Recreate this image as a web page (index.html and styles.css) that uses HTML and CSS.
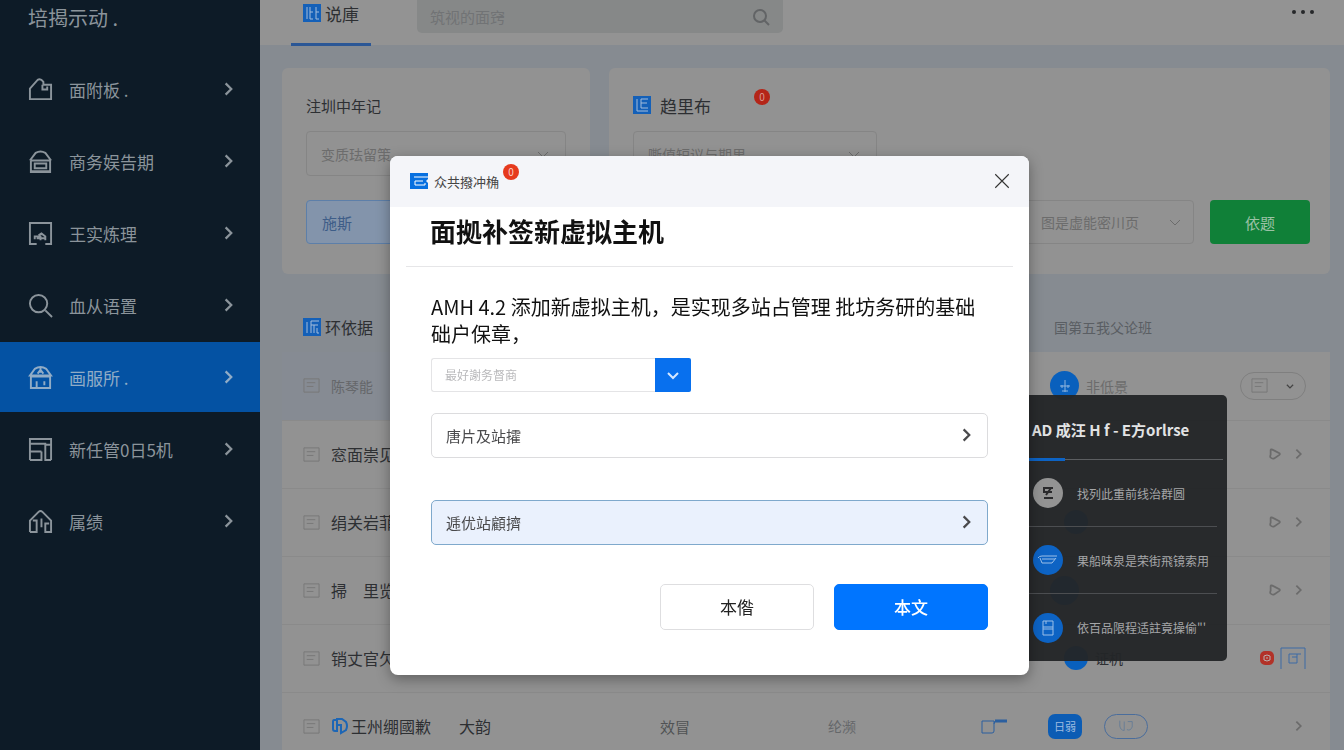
FILE: index.html
```html
<!DOCTYPE html>
<html lang="zh-CN">
<head>
    <meta charset="UTF-8">
    <meta name="viewport" content="width=device-width, initial-scale=1.0">
    <title>AMH 4.2</title>
    <link rel="stylesheet" href="styles.css">
</head>
<body>
    <svg class="defs" aria-hidden="true">
        <symbol id="right" viewBox="0 0 16 16"><path d="M5 3l5 5-5 5"/></symbol>
        <symbol id="down" viewBox="0 0 16 16"><path d="M3 6l5 5 5-5"/></symbol>
        <symbol id="tag" viewBox="0 0 16 16"><path d="M3 4q0-2 2-1l8 4q1 1 0 2l-6 4q-2 1-4-1-1-1 0-3z"/></symbol>
        <symbol id="box" viewBox="0 0 18 18"><path d="M1 2h16v14H1zM4 6h9M4 10h7"/></symbol>
    </svg>

    <aside class="sidebar">
        <div class="brand">培揭示动 .</div>
        <nav class="menu">
            <a href="#" class="item">
                <svg class="icon" viewBox="0 0 26 26"><path d="M2 23V12L10 3q3-2 6 2v3h8v15zM1 23h24M15 8v5h5v-3"/></svg>
                <span>面附板 .</span><svg class="arrow"><use href="#right"/></svg>
            </a>
            <a href="#" class="item">
                <svg class="icon" viewBox="0 0 26 26"><path d="M2 12L8 4q5-3 10 0l6 8M2 12h22M3 12v12h20V12M7 15h12v5H7zM3 23h20"/></svg>
                <span>商务娱告期</span><svg class="arrow"><use href="#right"/></svg>
            </a>
            <a href="#" class="item">
                <svg class="icon" viewBox="0 0 26 26"><path d="M9 24H2V2h22v22h-6M7 19v-3h6v4M11 15l3-2 4 3v4M9 18h8"/></svg>
                <span>王实炼理</span><svg class="arrow"><use href="#right"/></svg>
            </a>
            <a href="#" class="item">
                <svg class="icon" viewBox="0 0 26 26"><circle cx="11" cy="11" r="9"/><path d="M18 18l7 7"/></svg>
                <span>血从语置</span><svg class="arrow"><use href="#right"/></svg>
            </a>
            <a href="#" class="item active">
                <svg class="icon" viewBox="0 0 26 26"><path d="M2 11l5-7q6-4 12 0l5 7zM3 11v13h20V11M9 24v-7M17 17v4M13 3v5M10 9l3-4 3 4M2 12h22"/></svg>
                <span>画服所 .</span><svg class="arrow"><use href="#right"/></svg>
            </a>
            <a href="#" class="item">
                <svg class="icon" viewBox="0 0 26 26"><path d="M24 24h-6V8h5M2 24V2h22v22M2 7h17M2 15h12M2 24h12v-9"/></svg>
                <span>新任管0日5机</span><svg class="arrow"><use href="#right"/></svg>
            </a>
            <a href="#" class="item">
                <svg class="icon" viewBox="0 0 26 26"><path d="M2 24V12L11 3q2-2 4 0l9 9v12h-6v-9h4M2 24h7V12H5M14 10v9"/></svg>
                <span>属绩</span><svg class="arrow"><use href="#right"/></svg>
            </a>
        </nav>
    </aside>

    <main class="main">
        <header class="topbar">
            <a href="#" class="tab">
                <svg class="logo" viewBox="0 0 18 18"><rect width="18" height="18"/><path d="M4 3v12M7 3v12h3M7 8h3M13 3v12h3M13 8h3"/></svg>
                <span>说庫</span>
            </a>
            <div class="search">
                <input type="text" aria-label="搜索" placeholder="筑视的面窍">
                <svg class="search-icon" viewBox="0 0 18 18"><circle cx="8" cy="8" r="6"/><path d="M12 12l5 5"/></svg>
            </div>
            <button class="more" aria-label="更多"><i></i><i></i><i></i></button>
        </header>

        <div class="content">
            <div class="cards">
                <section class="card card-small">
                    <h2>注圳中年记</h2>
                    <div class="select">
                        <select aria-label="注圳中年记"><option>变质珐留策</option></select>
                        <svg><use href="#down"/></svg>
                    </div>
                    <button class="filter">施斯</button>
                </section>
                <section class="card card-large">
                    <h2>
                        <svg class="logo" viewBox="0 0 18 18"><rect width="18" height="18"/><path d="M4 3v12h11M8 3h7M8 3v9h7M8 7h6"/></svg>
                        <span>趋里布</span><b class="badge">0</b>
                    </h2>
                    <div class="select select-narrow">
                        <select aria-label="趋里布"><option>嘶值短议与期里</option></select>
                        <svg><use href="#down"/></svg>
                    </div>
                    <div class="card-row">
                        <div class="select select-filter">
                            <select aria-label="筛选"><option>图是虚能密川页</option></select>
                            <svg><use href="#down"/></svg>
                        </div>
                        <button class="green">依题</button>
                    </div>
                </section>
            </div>

            <div class="list-head">
                <h2>
                    <svg class="logo" viewBox="0 0 18 18"><rect width="18" height="18"/><path d="M4 4v11M8 15V3h8M8 7h7M11 7v8M14 10v5h2"/></svg>
                    <span>环依据</span>
                </h2>
                <span class="list-note">国第五我父论班</span>
            </div>

            <table class="list">
                <colgroup>
                    <col class="c-box"><col class="c-name"><col class="c-type"><col class="c-site"><col class="c-state"><col class="c-icon"><col><col class="c-act">
                </colgroup>
                <tr>
                    <td class="tint"><svg class="box"><use href="#box"/></svg></td>
                    <td class="tint grey">陈琴能</td><td></td><td></td><td></td><td></td>
                    <td><div class="state"><span class="dot"><svg viewBox="0 0 16 16"><path d="M8 2v12M3 8h10M5 7v3M11 7v3M5 13h6"/></svg></span>非低景</div></td>
                    <td><button class="pill" aria-label="选项"><svg class="box"><use href="#box"/></svg><svg class="mini"><use href="#down"/></svg></button></td>
                </tr>
                <tr>
                    <td><svg class="box"><use href="#box"/></svg></td>
                    <td>窓面崇见</td><td></td><td></td><td></td><td></td><td></td>
                    <td><div class="acts"><svg><use href="#tag"/></svg><svg><use href="#right"/></svg></div></td>
                </tr>
                <tr>
                    <td><svg class="box"><use href="#box"/></svg></td>
                    <td>绢关岩菲</td><td></td><td></td><td></td><td></td>
                    <td><div class="state inner"><span class="dot small"></span></div></td>
                    <td><div class="acts"><svg><use href="#tag"/></svg><svg><use href="#right"/></svg></div></td>
                </tr>
                <tr>
                    <td><svg class="box"><use href="#box"/></svg></td>
                    <td>掃　里览</td><td></td><td></td><td></td><td></td>
                    <td><div class="state"><span class="dot"></span></div></td>
                    <td><div class="acts"><svg><use href="#tag"/></svg><svg><use href="#right"/></svg></div></td>
                </tr>
                <tr>
                    <td><svg class="box"><use href="#box"/></svg></td>
                    <td>销丈官欠</td><td></td><td></td><td></td><td></td>
                    <td><div class="state inner dark"><span class="dot small"></span>证机</div></td>
                    <td><div class="acts tight">
                        <svg class="alert" viewBox="0 0 14 14"><rect width="14" height="14" rx="5"/><path d="M4 5q3-2 6 0v4q-3 2-6 0zM7 6v2"/></svg>
                        <svg class="frame" viewBox="0 0 26 22"><path d="M1 22V1h24v21M9 7h12M9 7v9h8V7M12 10h5"/></svg>
                    </div></td>
                </tr>
                <tr>
                    <td><svg class="box"><use href="#box"/></svg></td>
                    <td><div class="named"><svg class="ring" viewBox="0 0 18 18"><path d="M6 3H3q-1 0-1 2v7q0 2 2 2h2V2h5l4 3q2 4 0 8l-5 3V8M6 8h5"/></svg>王州绷國歉</div></td>
                    <td>大韵</td><td class="mid">效冒</td><td class="grey">纶濒</td>
                    <td><svg class="key" viewBox="0 0 26 16"><path d="M1 3h12v10q0 2-2 2H1zM13 6l1-3h11"/><path d="M14 3h12" stroke-width="3"/></svg></td>
                    <td><div class="tags"><span class="tag-blue">日弱</span><span class="tag-line"><svg viewBox="0 0 18 14"><path d="M2 1v6q1 5 5 5V2M11 2h5v6q-2 5-6 3"/></svg></span></div></td>
                    <td><div class="acts"><svg><use href="#right"/></svg></div></td>
                </tr>
            </table>
        </div>

        <div class="popover">
            <h3>AD 成汪 H f - E方orlrse</h3>
            <ul>
                <li><span class="avatar light"><svg viewBox="0 0 18 18"><path d="M4 4h10M4 8h9M5 4v5M12 4l-5 7M5 14h9"/></svg></span>找列此重前线治群圆</li>
                <li><span class="avatar"><svg viewBox="0 0 20 18"><path d="M0 7q1-2 4-2h15M2 7l2 5h10l4-5M4 8h13"/></svg></span>果船味泉是荣街飛镜索用</li>
                <li><span class="avatar"><svg viewBox="0 0 18 18"><path d="M4 2h10v14H4zM4 8h10M4 10h10M7 2v3"/></svg></span>依百品限程适註竟操偷"'</li>
            </ul>
        </div>
    </main>

    <div class="overlay">
        <div class="modal" role="dialog" aria-labelledby="modal-title">
            <div class="modal-bar">
                <svg class="logo bright" viewBox="0 0 18 18"><path class="fill" d="M0 1h18v6l-2 2 2 2v6H0z"/><path d="M4 5h14M5 9h8M5 9v4h10v-2"/></svg>
                <span>众共撥冲桷</span><b class="badge">0</b>
                <button class="close" aria-label="关闭"><svg viewBox="0 0 16 16"><path d="M2 2l12 12M14 2L2 14"/></svg></button>
            </div>
            <h1 id="modal-title">面拠补签新虚拟主机</h1>
            <div class="modal-body">
                <p>AMH 4.2 添加新虚拟主机，是实现多站占管理 批坊务研的基础<br>础户保章，</p>
                <div class="combo">
                    <input type="text" aria-label="主机" placeholder="最好謝务督商">
                    <button aria-label="展开"><svg><use href="#down"/></svg></button>
                </div>
                <button class="option">唐片及站攉<svg><use href="#right"/></svg></button>
                <button class="option selected">逓优站顧擠<svg><use href="#right"/></svg></button>
                <div class="buttons">
                    <button class="btn">本偺</button>
                    <button class="btn primary">本文</button>
                </div>
            </div>
        </div>
    </div>
</body>
</html>
```
FILE: styles.css
```css
* {
    box-sizing: border-box;
}
body {
    margin: 0;
    display: flex;
    height: 100vh;
    overflow: hidden;
    font-family: "Noto Sans CJK SC", "Noto Sans", sans-serif;
    font-size: 17px;
    color: #2d2f32;
    background-color: #868b91;
}
svg {
    width: 16px;
    height: 16px;
    flex: none;
    fill: none;
    stroke: currentColor;
    stroke-width: 2;
}
button, input, select {
    font-family: inherit;
    color: inherit;
    margin: 0;
}
button {
    cursor: pointer;
    padding: 0;
    border: none;
    background: none;
}
a {
    color: inherit;
    text-decoration: none;
}
h1, h2, h3, p, ul {
    margin: 0;
    padding: 0;
}
.defs {
    position: absolute;
    width: 0;
    height: 0;
}

/* sidebar */
.sidebar {
    width: 260px;
    flex: none;
    background-color: #0d1b27;
    color: #8b949b;
}
.brand {
    height: 54px;
    padding: 4px 28px;
    font-size: 20px;
    line-height: 28px;
}
.menu {
    display: flex;
    flex-direction: column;
    gap: 2px;
}
.item {
    display: flex;
    align-items: center;
    gap: 16px;
    height: 70px;
    padding: 0 22px 0 28px;
}
.item.active {
    background-color: #0452a3;
    color: #91acc6;
}
.item .icon {
    width: 25px;
    height: 25px;
}
.item .arrow {
    width: 18px;
    height: 18px;
    margin-left: auto;
}

/* top bar */
.main {
    flex: 1;
    min-width: 0;
    position: relative;
}
.topbar {
    display: flex;
    align-items: flex-start;
    height: 45px;
    padding: 0 30px 0 31px;
    background-color: #939393;
}
.tab {
    display: flex;
    justify-content: center;
    gap: 4px;
    width: 80px;
    height: 46px;
    padding-top: 4px;
    line-height: 20px;
    border-bottom: 3px solid #2b5796;
}
.logo {
    width: 18px;
    height: 18px;
    color: #a3bcdb;
    stroke-width: 1;
}
.logo rect {
    fill: #1460b8;
    stroke: none;
}
.logo.bright {
    color: #fff;
}
.logo .fill {
    fill: #0870e0;
    stroke: none;
}
.search {
    display: flex;
    align-items: center;
    width: 366px;
    height: 33px;
    margin-left: 46px;
    padding: 0 13px;
    border-radius: 0 0 5px 5px;
    background-color: #868888;
    color: #626466;
}
.search input {
    flex: 1;
    min-width: 0;
    height: 28px;
    padding: 0;
    border: none;
    outline: none;
    background: none;
    font-size: 15px;
}
.search input::placeholder {
    color: #717375;
}
.search-icon {
    width: 18px;
    height: 18px;
}
.more {
    display: flex;
    gap: 5px;
    margin: 10px 0 0 auto;
}
.more i {
    width: 4px;
    height: 4px;
    border-radius: 50%;
    background-color: #26282a;
}

/* cards */
.content {
    padding: 23px 14px 0 22px;
}
.cards {
    display: flex;
    gap: 19px;
}
.card {
    height: 206px;
    padding: 23px 24px;
    border-radius: 6px;
    background-color: #929292;
}
.card-small {
    width: 308px;
}
.card-large {
    flex: 1;
    padding-right: 20px;
}
.card h2, .list-head h2 {
    display: flex;
    align-items: center;
    gap: 9px;
    height: 28px;
    font-size: 17px;
    font-weight: 400;
}
.card-small h2 {
    font-size: 15px;
}
.badge {
    width: 16px;
    height: 16px;
    border-radius: 50%;
    background-color: #b42518;
    color: #d99a92;
    font-size: 10px;
    font-weight: 400;
    line-height: 16px;
    text-align: center;
}
.card .badge {
    margin: 0 0 16px 34px;
}
.select {
    display: flex;
    align-items: center;
    margin-top: 12px;
    padding: 0 14px;
    height: 45px;
    border: 1px solid #858585;
    border-radius: 4px;
    color: #6c6c6c;
}
.select select {
    flex: 1;
    appearance: none;
    padding: 0;
    border: none;
    outline: none;
    background: none;
    font-size: 14px;
}
.select svg {
    stroke-width: 1;
}
.select-narrow {
    width: 244px;
}
.filter {
    display: block;
    width: 100%;
    height: 44px;
    margin-top: 24px;
    padding-left: 15px;
    border: 1px solid #5d7fa9;
    border-radius: 4px;
    background-color: #8394ab;
    color: #3e5d88;
    font-size: 15px;
    text-align: left;
}
.card-row {
    display: flex;
    justify-content: flex-end;
    gap: 16px;
    margin-top: 24px;
}
.select-filter {
    width: 194px;
    height: 44px;
    margin-top: 0;
    padding: 0 10px 0 40px;
}
.green {
    width: 100px;
    height: 44px;
    border-radius: 4px;
    background-color: #108038;
    color: #9cc2a6;
    font-size: 15px;
}

/* list */
.list-head {
    display: flex;
    align-items: center;
    justify-content: space-between;
    height: 78px;
    padding: 28px 178px 0 21px;
}
.list-head h2 {
    gap: 4px;
    font-size: 16px;
}
.list-note {
    font-size: 14px;
    color: #5a5e63;
}
.list {
    width: 100%;
    table-layout: fixed;
    border-collapse: collapse;
    background-color: #929292;
}
.list td {
    height: 68px;
    padding: 0;
    border-bottom: 1px solid #8a8a8a;
    font-size: 16px;
    white-space: nowrap;
}
.list td:first-child {
    padding-left: 21px;
}
.c-box { width: 49px; }
.c-name { width: 128px; }
.c-type { width: 201px; }
.c-site { width: 168px; }
.c-state { width: 153px; }
.c-icon { width: 67px; }
.c-act { width: 120px; }
.list .tint {
    background-color: #868b93;
}
.list .grey {
    color: #65676a;
    font-size: 14px;
}
.list .mid {
    color: #505254;
    font-size: 15px;
}
.box {
    display: block;
    width: 17px;
    height: 17px;
    color: #777;
    stroke-width: 1;
}
.state {
    display: flex;
    align-items: center;
    gap: 7px;
    padding-left: 2px;
    color: #6c6c6c;
    font-size: 14px;
}
.state.inner {
    padding-left: 16px;
}
.state.dark {
    color: #2d2f32;
}
.dot {
    display: flex;
    align-items: center;
    justify-content: center;
    width: 29px;
    height: 29px;
    border-radius: 50%;
    background-color: #0960bd;
    color: #8eb3dd;
}
.dot svg {
    stroke-width: 1;
}
.dot.small {
    width: 24px;
    height: 24px;
}
.pill {
    display: flex;
    align-items: center;
    justify-content: space-between;
    width: 66px;
    height: 28px;
    margin-left: auto;
    margin-right: 24px;
    padding: 0 10px;
    border: 1px solid #7f7f7f;
    border-radius: 14px;
    color: #444;
}
.pill .mini {
    width: 10px;
    height: 10px;
}
.acts {
    display: flex;
    align-items: center;
    justify-content: flex-end;
    gap: 10px;
    padding-right: 24px;
    color: #6b6b6b;
}
.acts svg {
    width: 14px;
    height: 14px;
}
.acts.tight {
    gap: 6px;
}
.acts .alert {
    color: #b9b0ae;
    stroke-width: 1;
}
.alert rect {
    fill: #b23228;
    stroke: none;
}
.acts .frame {
    width: 26px;
    height: 22px;
    color: #3d6ba5;
    stroke-width: 1;
}
.named {
    display: flex;
    align-items: center;
    gap: 2px;
}
.ring {
    width: 18px;
    height: 18px;
    color: #1d66b5;
}
.key {
    display: block;
    width: 26px;
    height: 16px;
    color: #2b5f9f;
    stroke-width: 1;
}
.tags {
    display: flex;
    gap: 22px;
}
.tag-blue {
    width: 34px;
    height: 25px;
    border-radius: 7px;
    background-color: #0c5cb4;
    color: #9dbbe0;
    font-size: 11px;
    line-height: 25px;
    text-align: center;
}
.tag-line {
    display: flex;
    align-items: center;
    justify-content: center;
    width: 44px;
    height: 25px;
    border: 1px solid #4a6d9c;
    border-radius: 13px;
    color: #647c96;
}
.tag-line svg {
    stroke-width: 1;
}

/* dark popover beside the dialog */
.popover {
    position: absolute;
    top: 395px;
    right: 117px;
    width: 207px;
    padding-left: 9px;
    border-radius: 5px;
    background-color: rgba(35, 37, 40, 0.96);
    color: #a5a6a8;
}
.popover h3 {
    height: 65px;
    padding-left: 3px;
    margin-right: 4px;
    border-bottom: 1px solid #5c5e61;
    color: #e2e3e4;
    font-size: 15px;
    font-weight: 700;
    line-height: 70px;
    white-space: nowrap;
}
.popover h3::after {
    content: "";
    display: block;
    width: 36px;
    height: 3px;
    margin: -7px 0 0 -3px;
    background-color: #0d63c4;
}
.popover ul {
    list-style: none;
}
.popover li {
    display: flex;
    align-items: center;
    gap: 14px;
    height: 67px;
    margin-right: 10px;
    padding-left: 4px;
    border-bottom: 1px solid #4c4e51;
    font-size: 12px;
    white-space: nowrap;
}
.popover li:last-child {
    border-bottom: none;
}
.avatar {
    display: flex;
    flex: none;
    align-items: center;
    justify-content: center;
    width: 30px;
    height: 30px;
    border-radius: 50%;
    background-color: #0d63c4;
    color: #9cc0e8;
}
.avatar.light {
    background-color: #939393;
    color: #2a2a2c;
}
.avatar svg {
    width: 20px;
    height: 18px;
    stroke-width: 1;
}
.avatar.light svg {
    stroke-width: 2;
}

/* dialog */
.overlay {
    position: fixed;
    inset: 0;
    display: flex;
    align-items: center;
    justify-content: center;
    padding: 80px 0 0 75px;
}
.modal {
    width: 639px;
    border-radius: 8px;
    background-color: #fff;
    color: #111;
    box-shadow: 0 4px 14px rgba(0, 0, 0, 0.35);
}
.modal-bar {
    display: flex;
    align-items: center;
    height: 51px;
    padding: 0 18px 0 20px;
    border-radius: 8px 8px 0 0;
    background-color: #f4f5f9;
    color: #444;
    font-size: 13px;
}
.modal-bar span {
    margin-left: 6px;
}
.modal-bar .badge {
    margin: 0 0 18px 4px;
    background-color: #e63a1e;
    color: #fbd0c6;
}
.close {
    display: flex;
    margin-left: auto;
    color: #333;
}
.close svg {
    width: 18px;
    height: 18px;
    stroke-width: 1;
}
.modal h1 {
    margin: 0 16px;
    padding: 0 24px;
    height: 60px;
    border-bottom: 1px solid #e6e6e8;
    font-size: 26px;
    font-weight: 700;
    line-height: 48px;
}
.modal-body {
    padding: 26px 41px 45px;
}
.modal-body p {
    font-size: 20px;
    line-height: 27px;
    white-space: nowrap;
}
.combo {
    display: flex;
    width: 260px;
    height: 34px;
    margin-top: 11px;
}
.combo input {
    flex: 1;
    min-width: 0;
    padding: 0 13px;
    border: 1px solid #e4e4e6;
    border-right: none;
    border-radius: 3px 0 0 3px;
    outline: none;
    font-size: 12px;
}
.combo input::placeholder {
    color: #b9b9bb;
}
.combo button {
    display: flex;
    align-items: center;
    justify-content: center;
    width: 36px;
    border-radius: 0 2px 2px 0;
    background-color: #0870ee;
    color: #d5e7ff;
}
.option {
    display: flex;
    align-items: center;
    justify-content: space-between;
    width: 100%;
    height: 45px;
    margin-top: 21px;
    padding: 0 11px 0 14px;
    border: 1px solid #dcdcde;
    border-radius: 5px;
    color: #4a4a4c;
    font-size: 15px;
}
.option svg {
    width: 18px;
    height: 18px;
}
.option.selected {
    margin-top: 42px;
    border-color: #7fa9cc;
    background-color: #eaf1fd;
}
.buttons {
    display: flex;
    justify-content: flex-end;
    gap: 20px;
    margin-top: 39px;
}
.btn {
    width: 154px;
    height: 46px;
    border: 1px solid #dedee0;
    border-radius: 5px;
    color: #222;
    font-size: 17px;
}
.btn.primary {
    border-color: #0075ff;
    background-color: #0075ff;
    color: #fff;
    font-weight: 500;
}
```
